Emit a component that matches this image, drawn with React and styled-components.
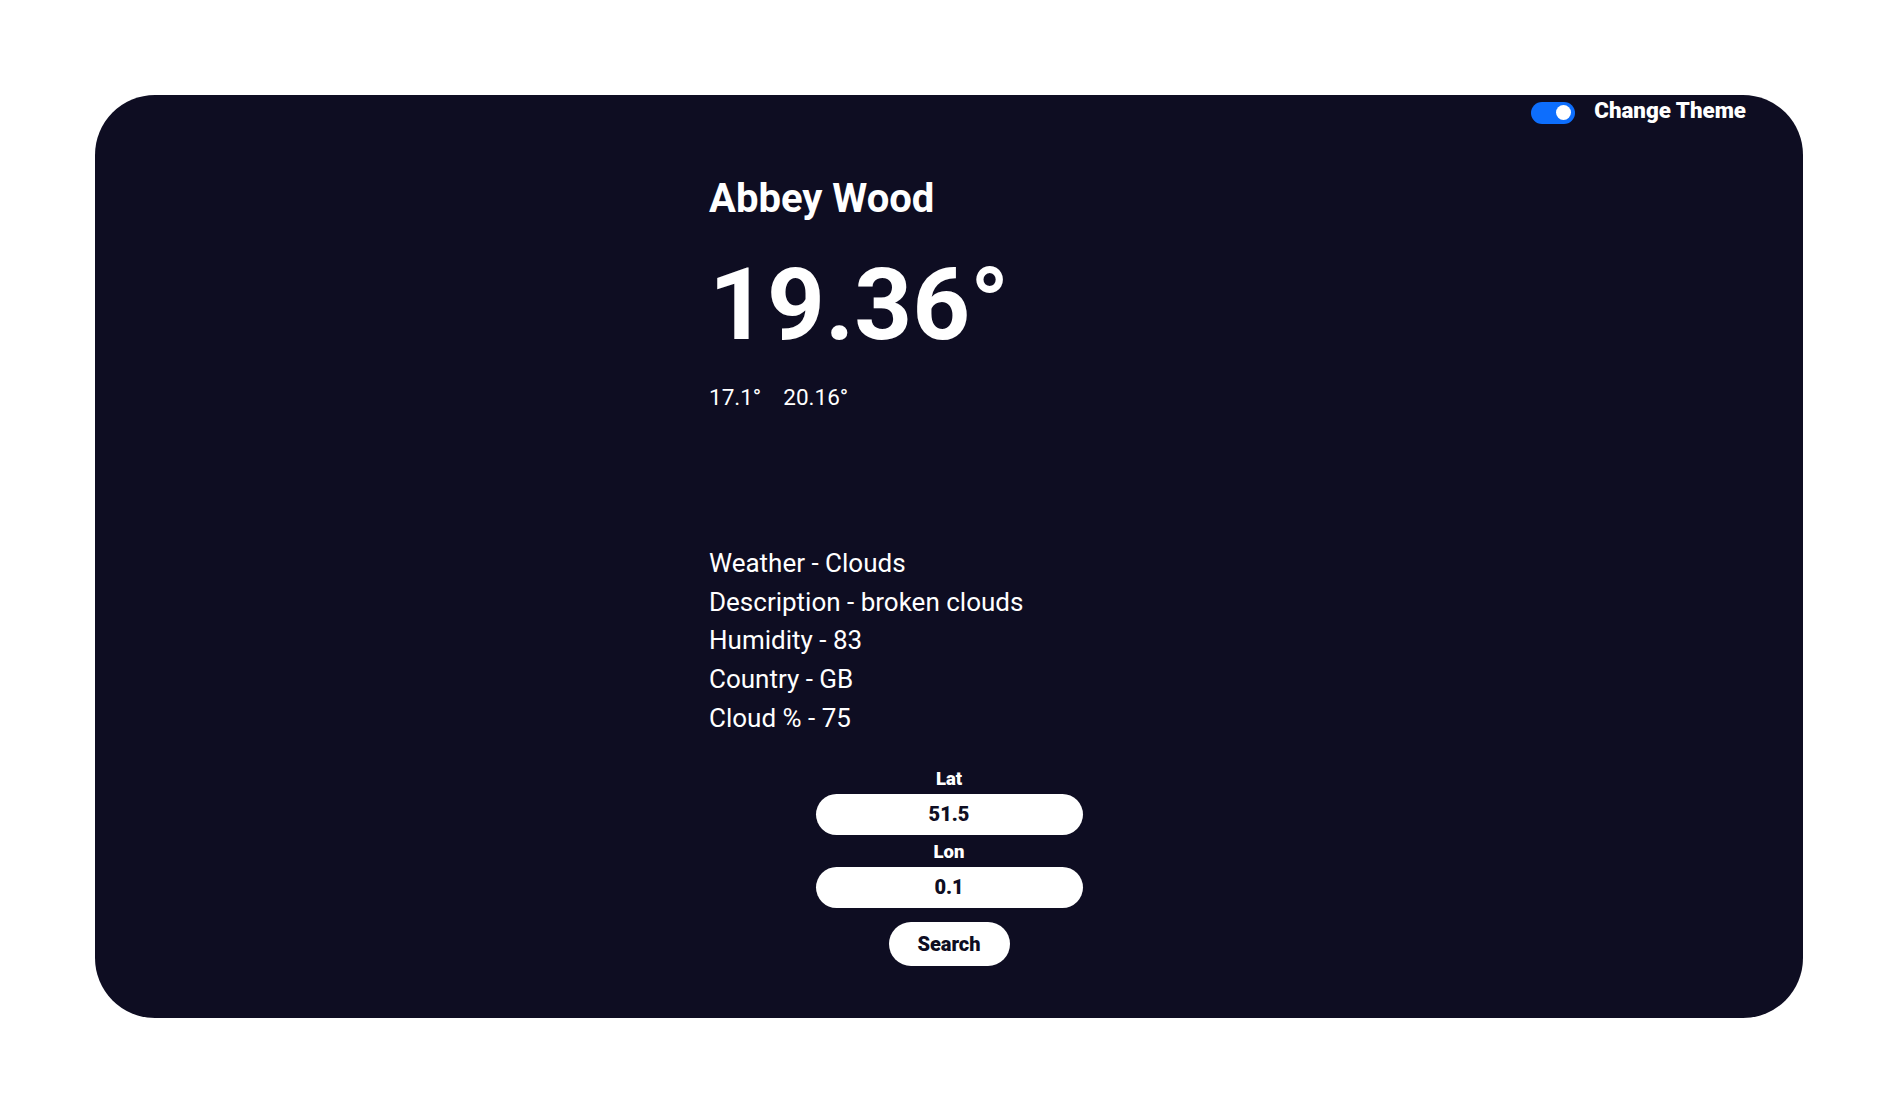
import React, { useState } from "react";
import styled, { createGlobalStyle } from "styled-components";

const GlobalStyle = createGlobalStyle`
  body {
    margin: 0;
    background: #ffffff;
    font-family: Roboto, "Noto Sans", sans-serif;
  }
`;

const Page = styled.div`
  padding: 95px;
`;

const Card = styled.div`
  height: 923px;
  box-sizing: border-box;
  background: #0e0d22;
  border-radius: 60px;
  color: #ffffff;
  display: flex;
  flex-direction: column;
`;

const TopBar = styled.div`
  height: 30px;
  display: flex;
  justify-content: flex-end;
  align-items: center;
  gap: 19px;
  padding: 0 57px 4px 0;
`;

const Switch = styled.button`
  width: 44px;
  height: 22px;
  margin-top: 5px;
  border: none;
  border-radius: 11px;
  padding: 0 4px;
  background: ${(p) => (p.on ? "#0d6efd" : "#6c757d")};
  display: flex;
  align-items: center;
  justify-content: ${(p) => (p.on ? "flex-end" : "flex-start")};
  cursor: pointer;
`;

const Knob = styled.span`
  width: 15px;
  height: 15px;
  border-radius: 50%;
  background: #ffffff;
`;

const ThemeLabel = styled.span`
  font-size: 22.3px;
  font-weight: 900;
`;

const Content = styled.div`
  width: 480px;
  margin: 46px auto 0;
`;

const City = styled.h1`
  margin: 0;
  font-size: 40px;
  font-weight: 700;
  line-height: normal;
`;

const Temp = styled.div`
  margin-top: 23px;
  font-size: 101px;
  font-weight: 700;
  line-height: normal;
`;

const MinMax = styled.div`
  margin-top: 20px;
  font-size: 22.5px;
  line-height: normal;
  display: flex;
  gap: 22px;
`;

const Details = styled.div`
  margin-top: 134px;
`;

const DetailLine = styled.div`
  font-size: 26px;
  line-height: 38.7px;
`;

const Form = styled.form`
  margin-top: 30px;
  display: flex;
  flex-direction: column;
  align-items: center;
`;

const Label = styled.label`
  font-size: 18.5px;
  font-weight: 900;
  line-height: normal;
  margin-top: ${(p) => p.gap || 0}px;
  margin-bottom: 4px;
`;

const Field = styled.input`
  width: 267px;
  height: 41px;
  box-sizing: border-box;
  border: none;
  border-radius: 21px;
  background: #ffffff;
  color: #0e0d22;
  font-family: Roboto, sans-serif;
  font-size: 20px;
  font-weight: 900;
  text-align: center;
  outline: none;
`;

const SearchButton = styled.button`
  margin-top: 14px;
  width: 121px;
  height: 44px;
  border: none;
  border-radius: 22px;
  background: #ffffff;
  color: #0e0d22;
  font-family: Roboto, sans-serif;
  font-size: 20px;
  font-weight: 900;
  cursor: pointer;
`;

const details = [
  "Weather - Clouds",
  "Description - broken clouds",
  "Humidity - 83",
  "Country - GB",
  "Cloud % - 75",
];

export default function App() {
  const [dark, setDark] = useState(true);
  const [lat, setLat] = useState("51.5");
  const [lon, setLon] = useState("0.1");

  return (
    <>
      <GlobalStyle />
      <Page>
        <Card>
          <TopBar>
            <Switch on={dark ? 1 : 0} onClick={() => setDark(!dark)}>
              <Knob />
            </Switch>
            <ThemeLabel>Change Theme</ThemeLabel>
          </TopBar>
          <Content>
            <City>Abbey Wood</City>
            <Temp>19.36°</Temp>
            <MinMax>
              <span>17.1°</span>
              <span>20.16°</span>
            </MinMax>
            <Details>
              {details.map((d) => (
                <DetailLine key={d}>{d}</DetailLine>
              ))}
            </Details>
          </Content>
          <Form onSubmit={(e) => e.preventDefault()}>
            <Label>Lat</Label>
            <Field value={lat} onChange={(e) => setLat(e.target.value)} />
            <Label gap={6}>Lon</Label>
            <Field value={lon} onChange={(e) => setLon(e.target.value)} />
            <SearchButton type="submit">Search</SearchButton>
          </Form>
        </Card>
      </Page>
    </>
  );
}
